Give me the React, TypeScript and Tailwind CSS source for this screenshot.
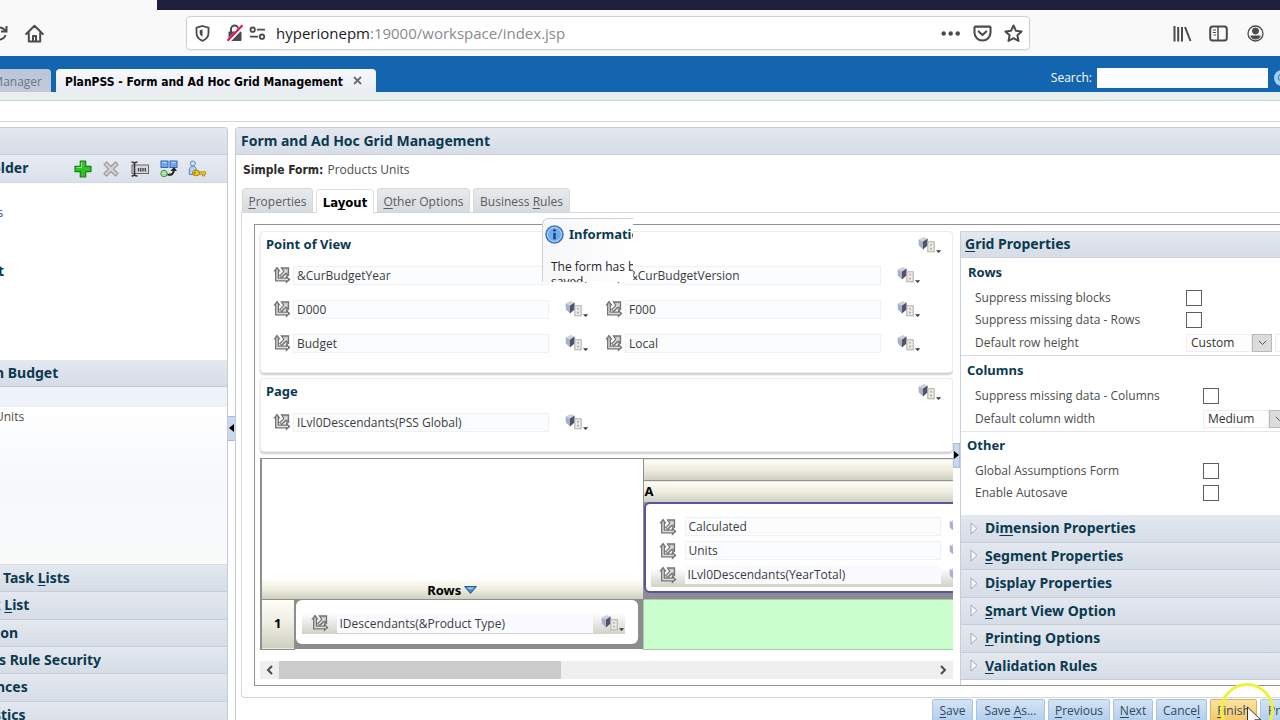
import { Search } from 'lucide-react';

const HEAD = 'bg-linear-to-b from-[#e4e8f0] to-[#d6dde6]';
const BOLD = "font-['Noto_Sans',sans-serif] font-bold text-[#0b3a50]";
const BEIGE = 'bg-linear-to-b from-[#fefef6] via-[#ecece0] to-[#cfcfbf]';

/** Renders a caption whose mnemonic letter follows an underscore. */
function Label({ text }: { text: string }) {
  const i = text.indexOf('_');
  if (i < 0) return <>{text}</>;
  return (
    <>
      {text.slice(0, i)}
      <u className="underline underline-offset-2">{text[i + 1]}</u>
      {text.slice(i + 2)}
    </>
  );
}

function DimIcon() {
  return (
    <svg width="18" height="18" viewBox="0 0 18 18" fill="none" className="shrink-0" aria-hidden="true">
      <path d="M4 4v9.500h9.500" stroke="#747474" strokeWidth="4" />
      <path d="M.3 5.500 4 .6l3.700 4.900ZM12.800 9.300l4.700 4.200-4.700 4.200Z" fill="#747474" />
      <path d="M4 3.500v10h11" stroke="#e0e0e0" strokeWidth="1.300" />
      <path d="M7.300 11 12 6.300" stroke="#747474" strokeWidth="4" />
      <path d="M8.500 2h7v7.200l-2-1.700-2.300-.2-.7-2.300Z" fill="#c9c9c9" stroke="#747474" strokeWidth="1.300" />
      <path d="M7.800 10.400 13.500 4.500" stroke="#e6e6e6" strokeWidth="1.300" />
      <path d="M14 8.500v3" stroke="#747474" strokeWidth="1.600" />
    </svg>
  );
}

function MenuIcon() {
  return (
    <svg width="24" height="18" viewBox="0 0 24 18" className="block" aria-hidden="true">
      <path d="M.6 3.600 5.800 1l3.600 1.600L5 5.400Z" fill="#ced1de" />
      <path d="M.6 3.600 5 5.400v8L.8 9.600Z" fill="#a9afc8" />
      <path d="M5 5.400 9.600 2.600v6.800L5 13.400Z" fill="#4f5468" />
      <rect x="9.800" y="5.800" width="6.400" height="10" fill="#eceae4" stroke="#adadad" />
      <rect x="12.200" y="8" width="1.600" height="1.600" fill="#cf9a92" />
      <rect x="12.200" y="11.800" width="1.600" height="1.600" fill="#8aab8e" />
      <path d="M18 14.200h5.200l-2.600 2.800Z" fill="#3a3a3a" />
    </svg>
  );
}

function MenuButton({ label }: { label: string }) {
  return (
    <button aria-label={label} className="w-6 shrink-0">
      <MenuIcon />
    </button>
  );
}

function Member({ value, plain }: { value: string; plain?: boolean }) {
  return (
    <>
      <DimIcon />
      <input
        aria-label={value}
        defaultValue={value}
        className={`h-[19px] w-64 shrink-0 pl-[3px] text-xs text-[#3c3c3c] ${
          plain ? 'bg-[#fafbfe]' : 'border border-[#eff1f3] bg-[#fbfcfe]'
        }`}
      />
    </>
  );
}

function Card({ title, rows }: { title: string; rows: string[][] }) {
  return (
    <section className="mb-[5px] rounded-sm border border-[#ececec] bg-white pb-[12px] shadow-[0_2px_2px_#cfcfcf]">
      <header className="flex h-[26px] items-center justify-between pr-[10px] pl-[5px]">
        <h3 className={`text-[13px] ${BOLD}`}>{title}</h3>
        <MenuButton label={`${title} menu`} />
      </header>
      {rows.map((row) => (
        <div key={row[0]} className="flex h-[34px] items-center gap-4 pl-[12px]">
          {row.map((v) => (
            <div key={v} className="flex items-center gap-4">
              <div className="flex items-center gap-[2px]">
                <Member value={v} />
              </div>
              <MenuButton label={`${v} menu`} />
            </div>
          ))}
        </div>
      ))}
    </section>
  );
}

const POV = [
  ['&CurBudgetYear', '&CurBudgetVersion'],
  ['D000', 'F000'],
  ['Budget', 'Local'],
];

function FormGrid() {
  return (
    <div className="mt-[1px] overflow-hidden">
      <table className="w-[900px] table-fixed border-collapse bg-white text-[13px]">
        <colgroup>
          <col className="w-[33px]" />
          <col className="w-[349px]" />
          <col />
        </colgroup>
        <thead>
          <tr>
            <th rowSpan={3} colSpan={2} className="border border-l-2 border-[#8f8f8f] p-0 align-bottom">
              <div className={`flex h-[19px] items-center justify-center gap-[3px] pt-[2px] leading-4 ${BEIGE} font-['Noto_Sans',sans-serif]`}>
                Rows
                <svg width="13" height="8" viewBox="0 0 13 8" aria-hidden="true">
                  <path d="M.5.5h12L6.500 7.500Z" fill="#3f8bc8" stroke="#2b5f92" />
                  <path d="M3 1.500h7L8 3.300H5Z" fill="#9fd0f0" />
                </svg>
              </div>
            </th>
            <th aria-label="Columns" className={`h-[22px] border border-[#8f8f8f] p-0 ${BEIGE}`} />
          </tr>
          <tr>
            <th className={`h-[21px] p-0 pl-px text-left leading-4 text-black ${BEIGE} font-['Noto_Sans',sans-serif]`}>A</th>
          </tr>
          <tr>
            <td className="bg-[#8d8c96] p-0 pb-[6px]">
              <div className="h-[91px] rounded-md border-2 border-[#5b549b] bg-white pt-[11px]">
                {['Calculated', 'Units', 'ILvl0Descendants(YearTotal)'].map((v, i) => (
                  <div
                    key={v}
                    className={`ml-[5px] flex h-6 items-center gap-2 pl-[8px] ${
                      i === 2 ? 'bg-linear-to-b from-white from-20% to-[#d3d2c8]' : ''
                    }`}
                  >
                    <Member value={v} plain={i === 2} />
                    <MenuButton label={`${v} menu`} />
                  </div>
                ))}
              </div>
            </td>
          </tr>
        </thead>
        <tbody>
          <tr>
            <th className={`h-[50px] border border-l-2 border-[#8f8f8f] p-0 font-['Noto_Sans',sans-serif] ${BEIGE}`}>1</th>
            <td className="bg-[#8d8d8d] p-0">
              <div className="mr-[5px] mb-[5px] ml-px flex h-[44px] items-center rounded-md bg-white pt-[3px] pl-[6px]">
                <div className="flex h-[21px] items-center gap-2 bg-linear-to-b from-white to-[#d3d2c8] pl-[9px]">
                  <Member value="IDescendants(&Product Type)" plain />
                  <MenuButton label="Product Type menu" />
                </div>
              </div>
            </td>
            <td className="border border-[#a8c8a8] bg-[#c9fdcb] p-0" />
          </tr>
        </tbody>
      </table>
    </div>
  );
}

function CheckRow({ label, pad }: { label: string; pad: string }) {
  return (
    <label className="flex h-[22px] items-center justify-between pl-[14px]">
      {label}
      <span className={`flex shrink-0 ${pad}`}>
        <input type="checkbox" className="size-4 appearance-none border border-[#5f5f5f] bg-white" />
      </span>
    </label>
  );
}

function SelectRow({ label, value, width, children }: { label: string; value: string; width: string; children?: React.ReactNode }) {
  return (
    <div className="flex h-6 items-center justify-between pl-[14px]">
      <label htmlFor={value}>{label}</label>
      <span className={`flex shrink-0 items-center ${width}`}>
        <span className="flex h-[18px] w-[86px] shrink-0 items-stretch">
          <select id={value} className="min-w-0 flex-1 appearance-none border border-[#eeeeee] bg-[#fdfdfd] pl-1 text-xs text-[#333]">
            <option>{value}</option>
          </select>
          <span className="flex w-5 items-center justify-center border border-[#b9b9b9] bg-[#dcdcdc]">
            <svg width="9" height="6" viewBox="0 0 9 6" fill="none" stroke="#555" aria-hidden="true">
              <path d="m.8.8 3.700 3.700L8.200.8" />
            </svg>
          </span>
        </span>
        {children}
      </span>
    </div>
  );
}

const SECTIONS = ['Di_mension Properties', '_Segment Properties', 'D_isplay Properties', '_Smart View Option', '_Printing Options', '_Validation Rules'];

function GridProperties() {
  return (
    <aside className="flex w-80 shrink-0 flex-col overflow-hidden border-l border-[#c9cdd6] text-xs text-[#4c4c4c]">
      <h2 className={`flex h-[27px] shrink-0 items-center border-y border-[#cfd4dc] pl-1 text-[14px] ${HEAD} ${BOLD}`}>
        <span><Label text="_Grid Properties" /></span>
      </h2>
      <section className="border-b border-[#d5d9de]">
        <h3 className={`flex h-[29px] items-center pl-[7px] text-[13px] ${BOLD}`}>Rows</h3>
        <CheckRow label="Suppress missing blocks" pad="w-[94px]" />
        <CheckRow label="Suppress missing data - Rows" pad="w-[94px]" />
        <SelectRow label="Default row height" value="Custom" width="w-[94px]">
          <input aria-label="Row height" defaultValue="1" className="ml-[3px] h-[18px] w-8 shrink-0 border border-[#eeeeee] pl-[3px] text-[#bbb]" />
        </SelectRow>
      </section>
      <section className="border-b border-[#e3e5e8]">
        <h3 className={`flex h-[29px] items-center pl-[6px] text-[13px] ${BOLD}`}>Columns</h3>
        <CheckRow label="Suppress missing data - Columns" pad="w-[77px]" />
        <SelectRow label="Default column width" value="Medium" width="w-[77px]" />
      </section>
      <section className="pb-[11px]">
        <h3 className={`flex h-[28px] items-center pl-[6px] text-[13px] ${BOLD}`}>Other</h3>
        <CheckRow label="Global Assumptions Form" pad="w-[77px]" />
        <CheckRow label="Enable Autosave" pad="w-[77px]" />
      </section>
      <div className="mb-[5px] flex flex-1 flex-col">
        {SECTIONS.map((s) => (
          <button key={s} className={`flex flex-1 items-center gap-[7px] border-b border-[#c6cdd6] pl-[9px] text-[14px] leading-5 ${HEAD} ${BOLD}`}>
            <svg width="8" height="13" viewBox="0 0 8 13" fill="#f8f9fb" stroke="#a3abb7" aria-hidden="true">
              <path d="M1 1v11l6-5.500Z" />
            </svg>
            <span><Label text={s} /></span>
          </button>
        ))}
      </div>
    </aside>
  );
}

const TABS: [string, string][] = [
  ['_Properties', 'w-[71px]'],
  ['La_yout', 'w-[58px]'],
  ['_Other Options', 'w-[93px]'],
  ['Business _Rules', 'w-[97px]'],
];

const ACTIONS: [string, string][] = [
  ['_Save', 'w-[41px]'],
  ['Save _As...', 'w-[69px]'],
  ['_Previous', 'w-[62px]'],
  ['_Next', 'w-[40px]'],
  ['Cance_l', 'w-[51px]'],
  ['_Finish', 'w-[47px]'],
  ['Preview', 'w-[60px]'],
];

function BrowserBar() {
  return (
    <header className="shrink-0">
      <div className="h-[10px] bg-[#211f3e] pr-[1123px]">
        <div className="h-full bg-[#f9f9fb]" />
      </div>
      <div className="flex h-[46px] items-center bg-[#f9f9fa] pr-[16px] text-[#4a4a4f]">
        <button aria-label="Reload" className="-ml-[9px]">
          <svg width="17" height="17" viewBox="0 0 17 17" fill="none" stroke="currentColor" strokeWidth="2" aria-hidden="true">
            <path d="M14.500 10A6 6 0 1 1 13 4.200L15 6M15.500 1v5.500H10" />
          </svg>
        </button>
        <button aria-label="Home" className="ml-[17px]">
          <svg width="19" height="19" viewBox="0 0 19 19" fill="none" stroke="currentColor" strokeWidth="2" strokeLinejoin="round" strokeLinecap="round" aria-hidden="true">
            <path d="M1.200 10 9.500 1.800 17.800 10M3.800 9v8.500h11.400V9" />
            <path d="M8 17v-5h3v5" />
          </svg>
        </button>
        <div className="ml-[142px] flex h-[34px] min-w-0 flex-1 items-center rounded-sm border border-[#d0d0d4] bg-white pr-[6px] pl-[8px] shadow-xs">
          <svg width="15" height="17" viewBox="0 0 15 17" fill="none" stroke="currentColor" strokeWidth="1.800" aria-hidden="true">
            <path d="M7.500 1 13.500 2.700V8c0 4-3 6.500-6 7.800C4.500 14.500 1.500 12 1.500 8V2.700Z" />
            <path d="M7.500 4.500v7.300C5.500 10.500 4.700 9.500 4.700 8V5.200Z" fill="currentColor" stroke="none" />
          </svg>
          <svg width="18" height="18" viewBox="0 0 18 18" fill="none" className="ml-[16px]" aria-hidden="true">
            <path d="M5 8V5.200a3.700 3.700 0 0 1 7.400 0V8" stroke="currentColor" strokeWidth="2" />
            <rect x="2.500" y="7.500" width="13" height="9.500" rx="1" fill="currentColor" />
            <path d="M2 17.500 17.500 1.500" stroke="#fff" strokeWidth="4" />
            <path d="M1.500 16.800 16.500 1.200" stroke="#e0124f" strokeWidth="2" />
          </svg>
          <svg width="17" height="15" viewBox="0 0 17 15" fill="none" stroke="currentColor" strokeWidth="1.800" className="ml-[5px]" aria-hidden="true">
            <circle cx="3.700" cy="3.700" r="2.200" />
            <path d="M8 3.700h8M1 10.700h8" />
            <circle cx="13" cy="10.700" r="2.200" />
          </svg>
          <p className="ml-[10px] flex-1 font-['Open_Sans',sans-serif] text-[15px] text-[#8a8a8f]">
            <span className="text-[#1b1b1e]">hyperionepm</span>:19000/workspace/index.jsp
          </p>
          <button aria-label="Page actions">
            <svg width="20" height="5" viewBox="0 0 20 5" fill="currentColor" aria-hidden="true">
              <circle cx="2.700" cy="2.500" r="2.200" />
              <circle cx="9.700" cy="2.500" r="2.200" />
              <circle cx="16.700" cy="2.500" r="2.200" />
            </svg>
          </button>
          <button aria-label="Save to Pocket" className="ml-[12px]">
            <svg width="19" height="17" viewBox="0 0 20 18" fill="none" stroke="currentColor" strokeWidth="2.200" strokeLinejoin="round" strokeLinecap="round" aria-hidden="true">
              <path d="M2.500 1.700h15a1 1 0 0 1 1 1V8a8.400 8.400 0 0 1-17 0V2.700a1 1 0 0 1 1-1Z" />
              <path d="m6 6.800 4 3.800 4-3.800" />
            </svg>
          </button>
          <button aria-label="Bookmark" className="ml-[12px]">
            <svg width="19" height="19" viewBox="0 0 19 19" fill="none" stroke="currentColor" strokeWidth="2" strokeLinejoin="round" aria-hidden="true">
              <path d="m9.500 1.500 2.400 5.200 5.700.7-4.200 3.900 1.100 5.700-5-2.800-5 2.800 1.100-5.700L1.400 7.400l5.700-.7Z" />
            </svg>
          </button>
        </div>
        <button aria-label="Library" className="ml-[143px]">
          <svg width="19" height="17" viewBox="0 0 19 17" fill="none" stroke="currentColor" strokeWidth="2" aria-hidden="true">
            <path d="M1.500 1v15.500M5.200 2v14.500M9 2v14.500M12 2l5.500 14" />
          </svg>
        </button>
        <button aria-label="Sidebars" className="ml-[17px]">
          <svg width="19" height="17" viewBox="0 0 19 17" fill="none" stroke="currentColor" strokeWidth="2" aria-hidden="true">
            <rect x="1.200" y="1.500" width="16.600" height="14" rx="2.500" />
            <path d="M9 1.500v14" strokeWidth="1.500" />
            <path d="M3.800 5H7M3.800 7.500H7M4.500 10H7" strokeWidth="1" />
          </svg>
        </button>
        <button aria-label="Account" className="ml-[19px]">
          <svg width="17" height="17" viewBox="0 0 17 17" fill="none" stroke="currentColor" aria-hidden="true">
            <circle cx="8.500" cy="8.500" r="7.500" strokeWidth="1.300" />
            <circle cx="8.500" cy="6" r="3" fill="currentColor" />
            <path d="M3.800 11h9.400c-.6 2-2.500 3-4.700 3s-4.100-1-4.700-3Z" fill="currentColor" />
          </svg>
        </button>
      </div>
    </header>
  );
}

function AppTabs() {
  return (
    <nav className="flex h-9 shrink-0 items-end bg-[#1465b0] text-xs">
      <a href="#manager" className="flex h-[23px] w-[51px] items-center justify-end rounded-tr-sm bg-linear-to-b from-[#b9c6da] to-[#c3cad8] pt-[3px] pr-[9px] text-[#6c7686]">
        Manager
      </a>
      <div className="ml-[5px] flex h-[23px] w-80 items-center justify-between rounded-t-sm bg-linear-to-b from-[#f7f9fd] to-[#e9edf3] pr-[14px] pl-[9px]">
        <a href="#form" className="pt-[3px] font-['DejaVu_Sans_Condensed','Noto_Sans',sans-serif] font-bold text-black">
          PlanPSS - Form and Ad Hoc Grid Management
        </a>
        <button aria-label="Close tab">
          <svg width="9" height="9" viewBox="0 0 9 9" stroke="#6b6b6b" strokeWidth="1.800" aria-hidden="true">
            <path d="m1 1 7 7M8 1 1 8" />
          </svg>
        </button>
      </div>
      <label className="mb-[4px] ml-auto flex items-center gap-[5px] text-white">
        Search:
        <input className="h-5 w-[171px] bg-[#fbfdff]" />
      </label>
      <button aria-label="Run search" className="-mr-[10px] mb-[6px] ml-[6px] flex size-4 items-center justify-center rounded-full bg-[#9fd2f2] text-[#17609c]">
        <Search size={10} />
      </button>
    </nav>
  );
}

function ToolIcons() {
  return (
    <div className="flex items-center gap-[10px]">
      <button aria-label="Add">
        <svg width="18" height="18" viewBox="0 0 18 18" aria-hidden="true">
          <path d="M6.300 1h5.400v5.300H17v5.400h-5.300V17H6.300v-5.300H1V6.300h5.300Z" fill="#35c02b" stroke="#16801a" strokeWidth="1.200" strokeLinejoin="round" />
          <path d="M7.500 7.500v-5M2.500 7.500h5" fill="none" stroke="#8aec74" strokeWidth="1.200" />
        </svg>
      </button>
      <button aria-label="Delete">
        <svg width="18" height="18" viewBox="0 0 18 18" aria-hidden="true">
          <path d="m4.500 2 4.500 4.500L13.500 2 16 4.500 11.500 9l4.500 4.500-2.500 2.500L9 11.500 4.500 16 2 13.500 6.500 9 2 4.500Z" fill="#d3d3d3" stroke="#9d9d9d" strokeWidth="1.200" strokeLinejoin="round" />
        </svg>
      </button>
      <button aria-label="Rename">
        <svg width="20" height="18" viewBox="0 0 20 18" fill="none" aria-hidden="true">
          <rect x="2" y="5" width="16.500" height="8.500" fill="#d8d8dc" stroke="#666" />
          <path d="M8.500 8v3.500M10.700 8v3.500M13 8v3.500M15.300 8v3.500" stroke="#444" strokeWidth="1.400" />
          <path d="M1.500 2c1.500 0 2.500.4 3 1.200C5 2.400 6 2 7.500 2M4.500 3v12M1.500 16c1.500 0 2.500-.4 3-1.200.5.800 1.500 1.200 3 1.200" stroke="#333" strokeWidth="1.600" />
        </svg>
      </button>
      <button aria-label="Move">
        <svg width="18" height="18" viewBox="0 0 18 18" aria-hidden="true">
          <rect x="1" y="1" width="7" height="6.500" fill="#6ea9ec" stroke="#2f69b8" />
          <rect x="10" y="1" width="7" height="6.500" fill="#6ea9ec" stroke="#2f69b8" />
          <path d="M2.500 2.500h4M11.500 2.500h4" stroke="#c4e0ff" />
          <circle cx="4" cy="13.500" r="3.200" fill="#a9e59b" stroke="#3c9440" />
          <path d="M7.500 14.500c4 .8 6-.5 6.500-4.500" fill="none" stroke="#222" strokeWidth="2" />
          <path d="m10.500 11 3.500-4 3 4Z" fill="#222" />
        </svg>
      </button>
      <button aria-label="Assign access">
        <svg width="18" height="18" viewBox="0 0 18 18" aria-hidden="true">
          <circle cx="4.800" cy="3.500" r="2.500" fill="#cfe2f8" stroke="#5d86bd" />
          <path d="M1.300 14.500V10C1.300 7.500 3 6.200 4.800 6.200S8.300 7.500 8.300 10v4.500Z" fill="#b4cff1" stroke="#5d86bd" />
          <ellipse cx="8" cy="13" rx="3.600" ry="2.800" fill="#f2c52b" stroke="#a8800b" />
          <circle cx="6.800" cy="13" r=".9" fill="#8f6c05" />
          <path d="M11.300 11.800h6.200v2.400h-1V16h-2v-1.800h-3.200Z" fill="#f2c52b" stroke="#a8800b" strokeWidth=".8" />
        </svg>
      </button>
    </div>
  );
}

const LEFT_SECTIONS: [string, string][] = [
  ['Task _Lists', 'ml-[3px]'],
  ['k _List', '-ml-[8px]'],
  ['ion', '-ml-1'],
  ['s Rule Security', '-ml-px'],
  ['nces', '-ml-1'],
  ['stics', '-ml-[6px]'],
];

export default function App() {
  return (
    <div className="relative flex h-screen flex-col overflow-hidden bg-white font-['Open_Sans','Noto_Sans',sans-serif] text-xs">
      <BrowserBar />
      <AppTabs />
      <div className="h-[9px] shrink-0 border-b border-[#cdd2d4] bg-[#e9eeee]" />
      <div className="h-[21px] shrink-0 border-b border-[#d4d7d9]" />

      <div className="mt-[5px] -mb-[9px] flex min-h-0 flex-1">
        <aside className="flex w-[228px] shrink-0 flex-col overflow-hidden rounded-tr-sm border-t border-r border-[#c5cbd3]">
          <div className={`h-[27px] shrink-0 border-b border-[#c9cfd8] ${HEAD}`} />
          <div className="flex h-[28px] shrink-0 items-center justify-between border-b border-[#d2d8e0] bg-linear-to-b from-[#e6eaf3] to-[#dbe1ea] pr-[21px]">
            <h2 className={`-ml-[8px] text-[14px] ${BOLD}`}>older</h2>
            <ToolIcons />
          </div>
          <ul className="flex h-[177px] shrink-0 flex-col pt-[21px]">
            <li><a href="#s" className="-ml-[3px] block h-[58px] text-[13px] text-[#2d5590]">s</a></li>
            <li className={`-ml-[2px] text-[14px] ${BOLD}`}>t</li>
          </ul>
          <h2 className={`flex h-[27px] shrink-0 items-center border-b border-[#c2cad4] text-[14px] ${HEAD} ${BOLD}`}>
            <span className="-ml-[5px]">n Budget</span>
          </h2>
          <div className="h-5 shrink-0 bg-[#eef2fb]" />
          <div className="h-[158px] shrink-0 border-b border-[#d8dde3] bg-linear-to-b from-white via-[#f6f8fc] to-[#f9faf9] pt-[2px] text-[#4c4c4c]">
            <span className="-ml-[5px]">Units</span>
          </div>
          <div className="flex flex-1 flex-col">
            {LEFT_SECTIONS.map(([s, m]) => (
              <button key={s} className={`flex flex-1 items-center border-b border-[#c6cdd6] text-[14px] leading-5 ${HEAD} ${BOLD}`}>
                <span className={m}><Label text={s} /></span>
              </button>
            ))}
          </div>
        </aside>

        <div className="flex w-[7px] shrink-0 items-center">
          <button aria-label="Collapse left pane" className="flex h-[25px] w-full items-center justify-center border-y border-[#a9bdd6] bg-[#c9d9ec]">
            <svg width="5" height="8" viewBox="0 0 5 8" aria-hidden="true"><path d="M5 0v8L0 4Z" /></svg>
          </button>
        </div>

        <main className="flex min-w-0 flex-1 flex-col overflow-hidden rounded-tl-sm border-t border-l border-[#c5cbd3]">
          <h1 className={`flex h-[27px] shrink-0 items-center border-b border-[#c9cfd8] pl-[5px] text-[14px] ${HEAD} ${BOLD}`}>
            Form and Ad Hoc Grid Management
          </h1>
          <p className="flex h-[29px] shrink-0 items-center gap-1 pt-px pl-[7px] text-[#4c4c4c]">
            <b className="font-['DejaVu_Sans_Condensed','Noto_Sans',sans-serif] text-[#2a2a2a]">Simple Form:</b>
            Products Units
          </p>
          <div role="tablist" className="flex h-[28px] shrink-0 items-end gap-[3px] pl-[6px]">
            {TABS.map(([t, w], i) => (
              <button
                key={t}
                role="tab"
                aria-selected={i === 1}
                className={`h-6 rounded-t-sm border border-b-0 pt-[3px] ${w} ${
                  i === 1
                    ? "z-10 -mb-px border-[#dcdfe2] bg-white font-['DejaVu_Sans_Condensed','Noto_Sans',sans-serif] text-[13px] font-bold text-black"
                    : 'border-[#d5d9dc] bg-linear-to-b from-[#e8ebec] to-[#d6dbe0] text-[#5c5c5c]'
                }`}
              >
                <Label text={t} />
              </button>
            ))}
          </div>

          <div className="ml-[5px] min-h-0 flex-1 rounded-bl-sm border-t border-b border-l border-[#d3d7da] pt-[11px] pb-[11px] pl-[12px]">
            <div className="relative flex h-full border-t border-b border-l border-[#8f9395]">
              <div className="flex min-w-0 flex-1 flex-col overflow-hidden pt-[6px] pl-[5px]">
                <Card title="Point of View" rows={POV} />
                <Card title="Page" rows={[['ILvl0Descendants(PSS Global)']]} />
                <FormGrid />
                <div className="mt-auto mb-[6px] flex h-[18px] shrink-0 items-center bg-[#efefef]">
                  <button aria-label="Scroll left" className="flex w-[19px] justify-center">
                    <svg width="7" height="10" viewBox="0 0 7 10" fill="none" stroke="#4c4c4c" strokeWidth="2" aria-hidden="true"><path d="M6 1 2 5l4 4" /></svg>
                  </button>
                  <div className="h-full flex-1"><div className="h-full w-[43%] bg-[#cbcbcb]" /></div>
                  <button aria-label="Scroll right" className="flex w-[19px] justify-center">
                    <svg width="7" height="10" viewBox="0 0 7 10" fill="none" stroke="#4c4c4c" strokeWidth="2" aria-hidden="true"><path d="m1 1 4 4-4 4" /></svg>
                  </button>
                </div>
              </div>
              <div className="flex w-[7px] shrink-0 items-center">
                <button aria-label="Collapse right pane" className="flex h-[25px] w-full items-center justify-center border border-[#a9bdd6] bg-[#c9d9ec]">
                  <svg width="5" height="8" viewBox="0 0 5 8" className="shrink-0" aria-hidden="true"><path d="M0 0v8l5-4Z" /></svg>
                </button>
              </div>
              <div className="flex pt-[6px]"><GridProperties /></div>

              <div role="dialog" aria-label="Information" className="absolute -top-[7px] left-[287px] z-10 h-[64px] w-[91px] overflow-hidden rounded-tl-md border-t border-l border-[#cfd3d8] bg-linear-to-r from-[#f6f7f9] to-white whitespace-nowrap">
                <div className="flex items-center gap-[5px] pt-[5px] pl-[2px]">
                  <svg width="19" height="19" viewBox="0 0 19 19" className="shrink-0" aria-hidden="true">
                    <circle cx="9.500" cy="9.500" r="8.500" fill="#6facea" stroke="#3a74b8" strokeWidth="1.500" />
                    <circle cx="9.500" cy="9.500" r="7" fill="none" stroke="#b9d9f8" />
                    <circle cx="9.500" cy="5.300" r="1.400" fill="#174487" />
                    <rect x="8.300" y="7.800" width="2.400" height="6.700" rx=".8" fill="#174487" />
                  </svg>
                  <h2 className={`text-[13px] leading-5 ${BOLD}`}>Information</h2>
                </div>
                <p className="pt-[15px] pl-[8px] text-xs leading-[15px] text-[#1f1f1f]">
                  The form has been<br />saved.
                </p>
              </div>
            </div>
          </div>

          <footer className="flex h-[31px] shrink-0 items-start justify-end gap-[3px] pt-px">
            {ACTIONS.map(([a, w]) => (
              <button
                key={a}
                className={`h-[23px] shrink-0 rounded-xs border text-xs ${w} ${
                  a === '_Finish'
                    ? 'border-[#d9b25a] bg-linear-to-b from-[#fbe3a2] to-[#f3c767] text-[#3c4654]'
                    : 'border-[#a9c3e0] bg-linear-to-b from-[#d3e3f5] to-[#b3cfec] text-[#33475e]'
                } ${a === 'Preview' ? '-mr-[40px]' : ''}`}
              >
                <Label text={a} />
              </button>
            ))}
          </footer>
        </main>
      </div>

      <svg width="60" height="60" viewBox="0 0 60 60" className="pointer-events-none absolute right-[3px] -bottom-[20px] z-20" aria-hidden="true">
        <circle cx="30" cy="30" r="25.500" fill="none" stroke="#eef23a" strokeWidth="3" />
        <path d="M30.500 27v18l4.300-4 3 6.500 3-1.400-3-6.300h6Z" fill="#fff" stroke="#333" />
      </svg>
    </div>
  );
}
